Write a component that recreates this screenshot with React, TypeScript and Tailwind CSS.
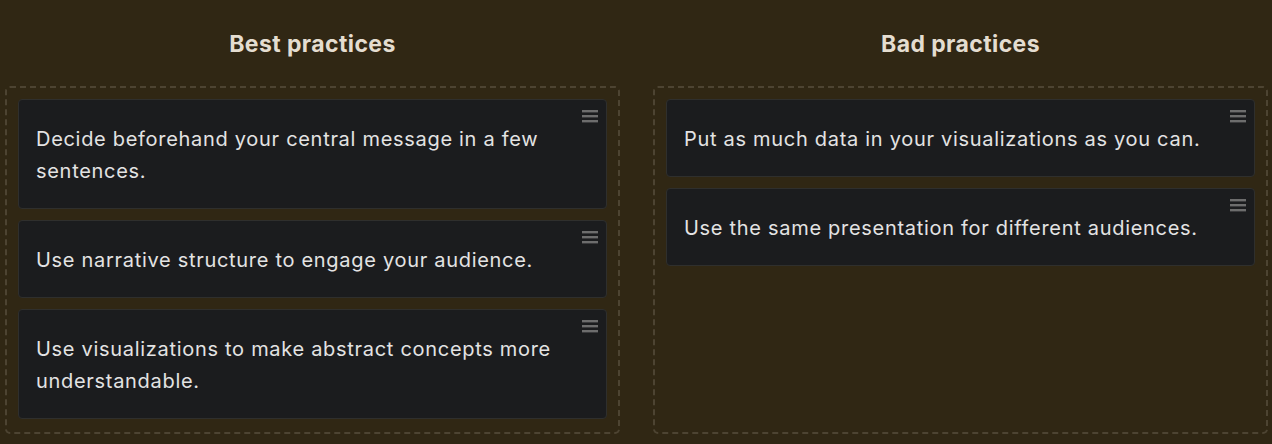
import { ReactNode } from "react";

const best = [
  "Decide beforehand your central message in a few sentences.",
  "Use narrative structure to engage your audience.",
  "Use visualizations to make abstract concepts more understandable.",
];

const bad = [
  "Put as much data in your visualizations as you can.",
  "Use the same presentation for different audiences.",
];

function Handle() {
  return (
    <svg width="16" height="14" viewBox="0 0 16 14" className="absolute right-[8px] top-[9px]">
      <rect x="0" y="1" width="16" height="2.4" fill="#6d6d6d" />
      <rect x="0" y="6" width="16" height="2.4" fill="#6d6d6d" />
      <rect x="0" y="11" width="16" height="2.4" fill="#6d6d6d" />
    </svg>
  );
}

function Card({ children }: { children: ReactNode }) {
  return (
    <div className="relative bg-[#1b1c1e] border border-[#2f2f2d] rounded-[4px] pl-[17px] pr-[40px] pt-[23px] pb-[21px] text-[20px] leading-[32px] tracking-[0.7px] text-[#e3e3e3]">
      <Handle />
      <p>{children}</p>
    </div>
  );
}

function Column({ title, items }: { title: string; items: string[] }) {
  return (
    <div className="flex flex-col flex-1">
      <h2 className="text-center text-[23px] font-bold text-[#e4ddd0] h-[86px] pt-[28px] leading-[32px] tracking-[0.4px]">
        {title}
      </h2>
      <div className="border-2 border-dashed border-[#4d4432] rounded-[5px] h-[348px] p-[11px] flex flex-col gap-[11px]">
        {items.map((t, i) => (
          <Card key={i}>{t}</Card>
        ))}
      </div>
    </div>
  );
}

export default function App() {
  return (
    <div
      className="w-[1272px] h-[444px] bg-[#302714] flex gap-[33px] pl-[5px] pr-[4px]"
      style={{ fontFamily: "Inter, 'Noto Sans', sans-serif" }}
    >
      <Column title="Best practices" items={best} />
      <Column title="Bad practices" items={bad} />
    </div>
  );
}
